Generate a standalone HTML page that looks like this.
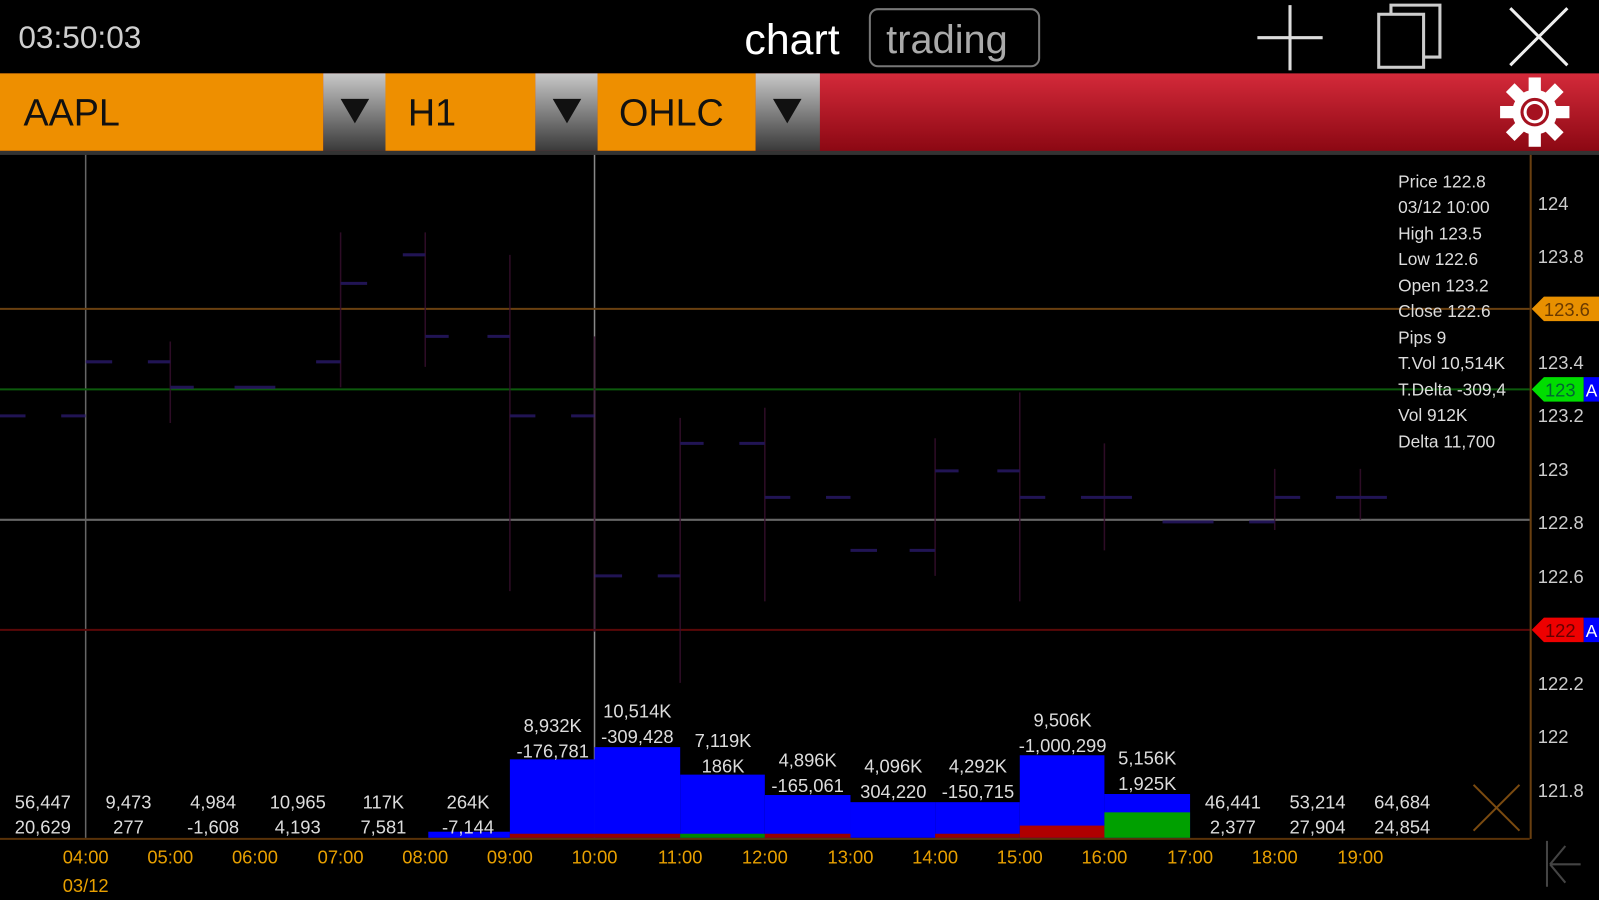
<!DOCTYPE html>
<html><head><meta charset="utf-8"><style>
body{margin:0;width:1599px;height:900px;background:#000;overflow:hidden;font-family:"Liberation Sans",sans-serif;}
svg{position:absolute;left:0;top:0}
</style></head><body>
<svg width="1599" height="900" viewBox="0 0 1568 883" preserveAspectRatio="none" font-family="Liberation Sans, sans-serif">
<defs>
<linearGradient id="red" x1="0" y1="0" x2="0" y2="1"><stop offset="0" stop-color="#d42a3a"/><stop offset="1" stop-color="#8a0712"/></linearGradient>
<linearGradient id="gr" x1="0" y1="0" x2="0" y2="1"><stop offset="0" stop-color="#c8c8c8"/><stop offset="1" stop-color="#3a3a3a"/></linearGradient>
</defs>
<text x="18" y="47" fill="#cfcfcf" font-size="31">03:50:03</text>
<text x="730" y="53" fill="#fff" font-size="42">chart</text>
<rect x="853" y="9" width="166" height="56" rx="8" fill="none" stroke="#777" stroke-width="2"/>
<text x="869" y="52" fill="#aaa" font-size="39">trading</text>
<path d="M1265 5V69M1233 37H1297" stroke="#ddd" stroke-width="3"/>
<rect x="1352" y="14" width="44" height="52" fill="none" stroke="#ccc" stroke-width="3"/>
<path d="M1364 14V5H1412V56H1396" fill="none" stroke="#ccc" stroke-width="3"/>
<path d="M1481 8L1537 64M1537 8L1481 64" stroke="#eee" stroke-width="3"/>
<rect x="0" y="72" width="1568" height="78" fill="url(#red)"/>
<rect x="0" y="72" width="317" height="76" fill="#ee8f00"/>
<rect x="317" y="72" width="61" height="76" fill="url(#gr)"/>
<rect x="378" y="72" width="147" height="76" fill="#ee8f00"/>
<rect x="525" y="72" width="61" height="76" fill="url(#gr)"/>
<rect x="586" y="72" width="155" height="76" fill="#ee8f00"/>
<rect x="741" y="72" width="63" height="76" fill="url(#gr)"/>
<path d="M334 97H362L348 121Z M542 97H570L556 121Z M758 97H786L772 121Z" fill="#111"/>
<text x="23" y="123" fill="#111" font-size="37">AAPL</text>
<text x="400" y="123" fill="#111" font-size="37">H1</text>
<text x="607" y="123" fill="#111" font-size="37">OHLC</text>
<g transform="translate(1505 110)" fill="#fff">
<circle r="22"/>
<g><rect x="-6" y="-34" width="12" height="68"/><rect x="-34" y="-6" width="68" height="12"/><rect x="-6" y="-34" width="12" height="68" transform="rotate(45)"/><rect x="-6" y="-34" width="12" height="68" transform="rotate(-45)"/></g>
<circle r="14" fill="#a51220"/><circle r="11" fill="#fff"/><circle r="8" fill="#a51220"/>
</g>
<rect x="0" y="148" width="1568" height="4" fill="#333"/>
<line x1="84" y1="152" x2="84" y2="822" stroke="#666" stroke-width="1.5"/>
<line x1="583" y1="152" x2="583" y2="822" stroke="#888" stroke-width="1.5"/>
<line x1="0" y1="303" x2="1500" y2="303" stroke="#6a4010" stroke-width="2"/>
<line x1="0" y1="382" x2="1500" y2="382" stroke="#0c5a0c" stroke-width="2"/>
<line x1="0" y1="510" x2="1500" y2="510" stroke="#666" stroke-width="2"/>
<line x1="0" y1="618" x2="1500" y2="618" stroke="#5a0808" stroke-width="2"/>
<g stroke-width="1.5" opacity="0.8">
<path d="M167 335V415M334 228V380M417 228V360M500 250V580M750 400V590M1000 385V590M583 330V620M667 410V670M917 430V565M1083 435V540M1250 460V520M1334 460V510" stroke="#3a1030"/>
<path d="M0 408H25M60 408H84M84 355H110M145 355H167M167 380H190M230 380H270M310 355H334M334 278H360M395 250H417M417 330H440M478 330H500M500 408H525M560 408H583M583 565H610M645 565H667M667 435H690M725 435H750M750 488H775M810 488H834M834 540H860M892 540H917M917 462H940M978 462H1000M1000 488H1025M1060 488H1110M1140 512H1190M1225 512H1250M1250 488H1275M1310 488H1360" stroke="#2a1a6a" stroke-width="3"/>
</g>
<g fill="#0000ff">
<rect x="500" y="745" width="83" height="77"/>
<rect x="583" y="733" width="84" height="89"/>
<rect x="667" y="760" width="83" height="62"/>
<rect x="750" y="780" width="84" height="42"/>
<rect x="834" y="787" width="83" height="35"/>
<rect x="917" y="787" width="83" height="35"/>
<rect x="1000" y="741" width="83" height="81"/>
<rect x="1083" y="779" width="84" height="43"/>
<rect x="420" y="816" width="80" height="6"/>
</g>
<rect x="1000" y="810" width="83" height="12" fill="#b00000"/>
<rect x="1083" y="797" width="84" height="25" fill="#00a000"/>
<rect x="500" y="818" width="83" height="4" fill="#900"/>
<rect x="583" y="818" width="84" height="4" fill="#900"/>
<rect x="667" y="818" width="83" height="4" fill="#080"/>
<rect x="750" y="818" width="84" height="4" fill="#900"/>
<rect x="917" y="818" width="83" height="4" fill="#900"/>
<line x1="0" y1="823" x2="1500" y2="823" stroke="#5a3208" stroke-width="2"/>
<line x1="1501" y1="152" x2="1501" y2="823" stroke="#6a4010" stroke-width="2"/>
<g fill="#ddd" font-size="18" text-anchor="middle">
<text x="42" y="793">56,447</text><text x="42" y="818">20,629</text>
<text x="126" y="793">9,473</text><text x="126" y="818">277</text>
<text x="209" y="793">4,984</text><text x="209" y="818">-1,608</text>
<text x="292" y="793">10,965</text><text x="292" y="818">4,193</text>
<text x="376" y="793">117K</text><text x="376" y="818">7,581</text>
<text x="459" y="793">264K</text><text x="459" y="818">-7,144</text>
<text x="542" y="718">8,932K</text><text x="542" y="743">-176,781</text>
<text x="625" y="704">10,514K</text><text x="625" y="729">-309,428</text>
<text x="709" y="733">7,119K</text><text x="709" y="758">186K</text>
<text x="792" y="752">4,896K</text><text x="792" y="777">-165,061</text>
<text x="876" y="758">4,096K</text><text x="876" y="783">304,220</text>
<text x="959" y="758">4,292K</text><text x="959" y="783">-150,715</text>
<text x="1042" y="713">9,506K</text><text x="1042" y="738">-1,000,299</text>
<text x="1125" y="750">5,156K</text><text x="1125" y="775">1,925K</text>
<text x="1209" y="793">46,441</text><text x="1209" y="818">2,377</text>
<text x="1292" y="793">53,214</text><text x="1292" y="818">27,904</text>
<text x="1375" y="793">64,684</text><text x="1375" y="818">24,854</text>
</g>
<g fill="#e8a000" font-size="18" text-anchor="middle">
<text x="84" y="847">04:00</text><text x="167" y="847">05:00</text><text x="250" y="847">06:00</text><text x="334" y="847">07:00</text><text x="417" y="847">08:00</text><text x="500" y="847">09:00</text><text x="583" y="847">10:00</text><text x="667" y="847">11:00</text><text x="750" y="847">12:00</text><text x="834" y="847">13:00</text><text x="917" y="847">14:00</text><text x="1000" y="847">15:00</text><text x="1083" y="847">16:00</text><text x="1167" y="847">17:00</text><text x="1250" y="847">18:00</text><text x="1334" y="847">19:00</text>
<text x="84" y="875">03/12</text>
</g>
<g fill="#ccc" font-size="18">
<text x="1508" y="206">124</text><text x="1508" y="258">123.8</text><text x="1508" y="362">123.4</text><text x="1508" y="414">123.2</text><text x="1508" y="467">123</text><text x="1508" y="519">122.8</text><text x="1508" y="572">122.6</text><text x="1508" y="677">122.2</text><text x="1508" y="729">122</text><text x="1508" y="782">121.8</text>
</g>
<path d="M1502 303L1514 291H1568V315H1514Z" fill="#e89000"/>
<text x="1514" y="310" fill="#6a3a00" font-size="18">123.6</text>
<path d="M1502 382L1514 370H1553V394H1514Z" fill="#00dd00"/>
<rect x="1553" y="370" width="15" height="24" fill="#0000ff"/>
<text x="1515" y="389" fill="#063" font-size="18">123</text><text x="1555" y="389" fill="#fff" font-size="17">A</text>
<path d="M1502 618L1514 606H1553V630H1514Z" fill="#ee0000"/>
<rect x="1553" y="606" width="15" height="24" fill="#0000ff"/>
<text x="1515" y="625" fill="#600" font-size="18">122</text><text x="1555" y="625" fill="#fff" font-size="17">A</text>
<g fill="#ddd" font-size="17">
<text x="1371" y="184">Price 122.8</text><text x="1371" y="209">03/12 10:00</text><text x="1371" y="235">High 123.5</text><text x="1371" y="260">Low 122.6</text><text x="1371" y="286">Open 123.2</text><text x="1371" y="311">Close 122.6</text><text x="1371" y="337">Pips 9</text><text x="1371" y="362">T.Vol 10,514K</text><text x="1371" y="388">T.Delta -309,4</text><text x="1371" y="413">Vol 912K</text><text x="1371" y="439">Delta 11,700</text>
</g>
<path d="M1445 770L1490 815M1490 770L1445 815" stroke="#7a4a10" stroke-width="2"/>
<path d="M1517 825V870M1520 848H1550M1520 848L1535 830M1520 848L1535 866" stroke="#444" stroke-width="2" fill="none"/>
</svg>
</body></html>
